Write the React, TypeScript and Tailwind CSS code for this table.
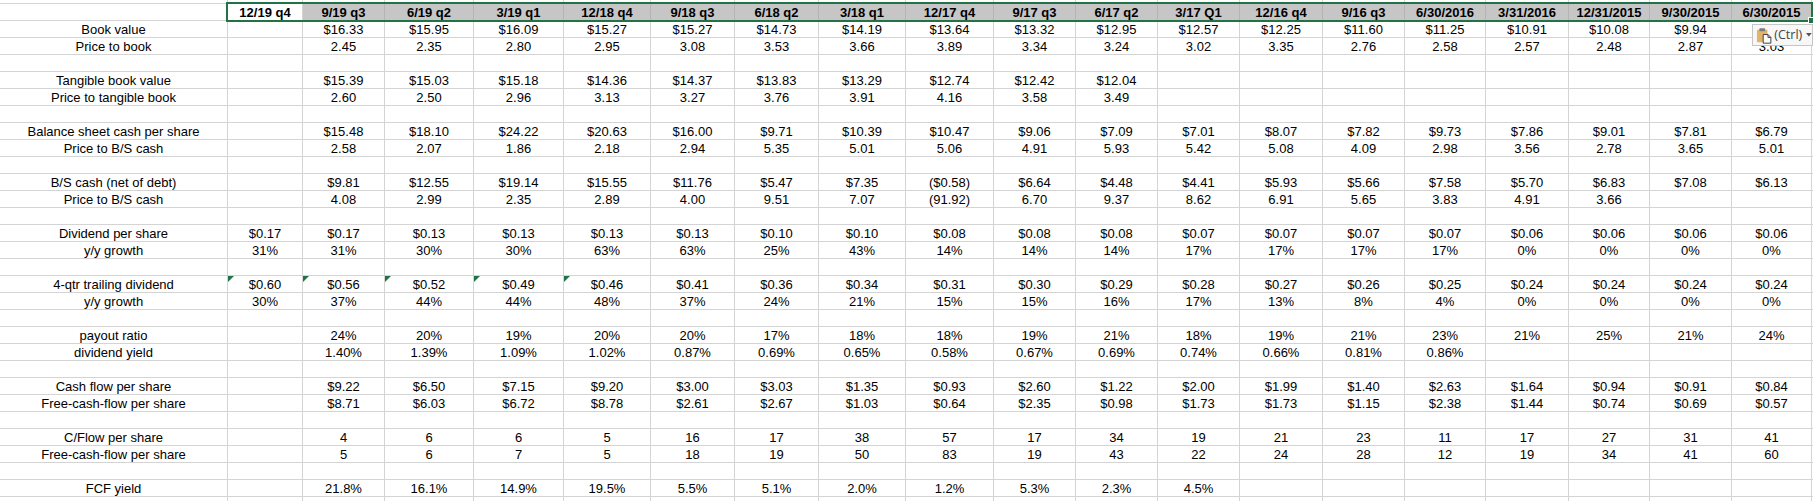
import React from "react";

const headers = [
  "12/19 q4", "9/19 q3", "6/19 q2", "3/19 q1", "12/18 q4", "9/18 q3", "6/18 q2", "3/18 q1",
  "12/17 q4", "9/17 q3", "6/17 q2", "3/17 Q1", "12/16 q4", "9/16 q3", "6/30/2016", "3/31/2016",
  "12/31/2015", "9/30/2015", "6/30/2015",
];

type Row = { label: string; values: string[]; tri?: boolean } | null;

const pad = (arr: string[]) => {
  const out = arr.slice();
  while (out.length < 19) out.push("");
  return out;
};

const rows: Row[] = [
  { label: "Book value", values: pad(["", "$16.33", "$15.95", "$16.09", "$15.27", "$15.27", "$14.73", "$14.19", "$13.64", "$13.32", "$12.95", "$12.57", "$12.25", "$11.60", "$11.25", "$10.91", "$10.08", "$9.94", ""]) },
  { label: "Price to book", values: pad(["", "2.45", "2.35", "2.80", "2.95", "3.08", "3.53", "3.66", "3.89", "3.34", "3.24", "3.02", "3.35", "2.76", "2.58", "2.57", "2.48", "2.87", "3.03"]) },
  null,
  { label: "Tangible book value", values: pad(["", "$15.39", "$15.03", "$15.18", "$14.36", "$14.37", "$13.83", "$13.29", "$12.74", "$12.42", "$12.04"]) },
  { label: "Price to tangible book", values: pad(["", "2.60", "2.50", "2.96", "3.13", "3.27", "3.76", "3.91", "4.16", "3.58", "3.49"]) },
  null,
  { label: "Balance sheet cash per share", values: pad(["", "$15.48", "$18.10", "$24.22", "$20.63", "$16.00", "$9.71", "$10.39", "$10.47", "$9.06", "$7.09", "$7.01", "$8.07", "$7.82", "$9.73", "$7.86", "$9.01", "$7.81", "$6.79"]) },
  { label: "Price to B/S cash", values: pad(["", "2.58", "2.07", "1.86", "2.18", "2.94", "5.35", "5.01", "5.06", "4.91", "5.93", "5.42", "5.08", "4.09", "2.98", "3.56", "2.78", "3.65", "5.01"]) },
  null,
  { label: "B/S cash (net of debt)", values: pad(["", "$9.81", "$12.55", "$19.14", "$15.55", "$11.76", "$5.47", "$7.35", "($0.58)", "$6.64", "$4.48", "$4.41", "$5.93", "$5.66", "$7.58", "$5.70", "$6.83", "$7.08", "$6.13"]) },
  { label: "Price to B/S cash", values: pad(["", "4.08", "2.99", "2.35", "2.89", "4.00", "9.51", "7.07", "(91.92)", "6.70", "9.37", "8.62", "6.91", "5.65", "3.83", "4.91", "3.66"]) },
  null,
  { label: "Dividend per share", values: pad(["$0.17", "$0.17", "$0.13", "$0.13", "$0.13", "$0.13", "$0.10", "$0.10", "$0.08", "$0.08", "$0.08", "$0.07", "$0.07", "$0.07", "$0.07", "$0.06", "$0.06", "$0.06", "$0.06"]) },
  { label: "y/y growth", values: pad(["31%", "31%", "30%", "30%", "63%", "63%", "25%", "43%", "14%", "14%", "14%", "17%", "17%", "17%", "17%", "0%", "0%", "0%", "0%"]) },
  null,
  { label: "4-qtr trailing dividend", tri: true, values: pad(["$0.60", "$0.56", "$0.52", "$0.49", "$0.46", "$0.41", "$0.36", "$0.34", "$0.31", "$0.30", "$0.29", "$0.28", "$0.27", "$0.26", "$0.25", "$0.24", "$0.24", "$0.24", "$0.24"]) },
  { label: "y/y growth", values: pad(["30%", "37%", "44%", "44%", "48%", "37%", "24%", "21%", "15%", "15%", "16%", "17%", "13%", "8%", "4%", "0%", "0%", "0%", "0%"]) },
  null,
  { label: "payout ratio", values: pad(["", "24%", "20%", "19%", "20%", "20%", "17%", "18%", "18%", "19%", "21%", "18%", "19%", "21%", "23%", "21%", "25%", "21%", "24%"]) },
  { label: "dividend yield", values: pad(["", "1.40%", "1.39%", "1.09%", "1.02%", "0.87%", "0.69%", "0.65%", "0.58%", "0.67%", "0.69%", "0.74%", "0.66%", "0.81%", "0.86%"]) },
  null,
  { label: "Cash flow per share", values: pad(["", "$9.22", "$6.50", "$7.15", "$9.20", "$3.00", "$3.03", "$1.35", "$0.93", "$2.60", "$1.22", "$2.00", "$1.99", "$1.40", "$2.63", "$1.64", "$0.94", "$0.91", "$0.84"]) },
  { label: "Free-cash-flow per share", values: pad(["", "$8.71", "$6.03", "$6.72", "$8.78", "$2.61", "$2.67", "$1.03", "$0.64", "$2.35", "$0.98", "$1.73", "$1.73", "$1.15", "$2.38", "$1.44", "$0.74", "$0.69", "$0.57"]) },
  null,
  { label: "C/Flow per share", values: pad(["", "4", "6", "6", "5", "16", "17", "38", "57", "17", "34", "19", "21", "23", "11", "17", "27", "31", "41"]) },
  { label: "Free-cash-flow per share", values: pad(["", "5", "6", "7", "5", "18", "19", "50", "83", "19", "43", "22", "24", "28", "12", "19", "34", "41", "60"]) },
  null,
  { label: "FCF yield", values: pad(["", "21.8%", "16.1%", "14.9%", "19.5%", "5.5%", "5.1%", "2.0%", "1.2%", "5.3%", "2.3%", "4.5%"]) },
  null,
];

const GRID =
  "grid grid-cols-[228px_75px_82px_89px_90px_87px_84px_84px_87px_88px_82px_82px_82px_83px_82px_81px_83px_81px_82px_80px_100px] w-max";

const cell = "h-[17px] border-r border-b border-[#d4d4d4] text-center leading-[17px] whitespace-nowrap";

function PasteIcon() {
  return (
    <svg width="17" height="17" viewBox="0 0 17 17">
      <rect x="1" y="2.5" width="11" height="13" rx="1" fill="#e2b46a" />
      <rect x="3.5" y="1" width="6" height="3" rx="0.5" fill="#7d7d7d" />
      <path d="M7.5 7.5 H12.5 L15.5 10.5 V16.5 H7.5 Z" fill="#ffffff" stroke="#3c3c3c" strokeWidth="1" />
      <path d="M12.5 7.5 V10.5 H15.5" fill="none" stroke="#3c3c3c" strokeWidth="1" />
    </svg>
  );
}

export default function App() {
  return (
    <div
      className="relative w-[1813px] h-[501px] overflow-hidden bg-white text-black text-[13px]"
      style={{ fontFamily: '"Liberation Sans", Arial, sans-serif' }}
    >
      <div className={GRID}>
        {/* partial top row */}
        {Array.from({ length: 21 }).map((_, i) => (
          <div key={"t" + i} className="h-[4px] border-r border-b border-[#d4d4d4]" />
        ))}
        {/* header row */}
        <div className={cell} />
        {headers.map((h, i) => (
          <div
            key={"h" + i}
            className={
              i === 0
                ? cell + " font-bold bg-white"
                : "h-[17px] border-r border-b border-[#b4b4b4] bg-[#c6c6c6] text-center leading-[17px] whitespace-nowrap font-bold"
            }
          >
            {h}
          </div>
        ))}
        <div className={cell} />
        {rows.map((r, ri) => (
          <React.Fragment key={"r" + ri}>
            <div className={cell}>{r ? r.label : ""}</div>
            {Array.from({ length: 19 }).map((_, ci) => (
              <div key={ci} className={cell + " relative"}>
                {r && r.tri && ci < 5 ? (
                  <span className="absolute left-0 top-0 w-0 h-0 border-t-[6px] border-r-[6px] border-t-[#217346] border-r-transparent" />
                ) : null}
                {r ? r.values[ci] : ""}
              </div>
            ))}
            <div className={cell} />
          </React.Fragment>
        ))}
        {Array.from({ length: 21 }).map((_, i) => (
          <div key={"b" + i} className={cell} />
        ))}
      </div>

      {/* selection border */}
      <div className="absolute left-[226px] top-[2px] w-[1587px] h-[20px] border-2 border-[#217346] pointer-events-none" />
      {/* fill handle */}
      <div className="absolute left-[1808px] top-[17px] w-[7px] h-[7px] bg-[#217346] border border-white" />

      {/* paste options button */}
      <div className="absolute left-[1752px] top-[24px] w-[61px] h-[22px] bg-[#f7f7f7] border border-[#c6c6c6] flex items-center pl-[3px] gap-[2px] text-[#444444]">
        <PasteIcon />
        <span className="text-[12.5px] leading-none" style={{ fontFamily: '"Open Sans", "Liberation Sans", sans-serif' }}>
          (Ctrl)
        </span>
        <svg width="6" height="4" viewBox="0 0 6 4" className="ml-[2px]">
          <path d="M0 0 H6 L3 3.5 Z" fill="#555555" />
        </svg>
      </div>
    </div>
  );
}
